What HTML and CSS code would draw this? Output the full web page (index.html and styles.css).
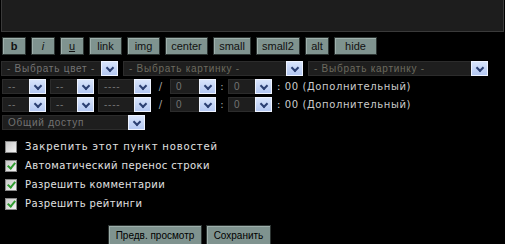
FILE: index.html
```html
<!DOCTYPE html>
<html lang="ru">
<head>
    <meta charset="UTF-8">
    <title>Добавить новость</title>
    <link rel="stylesheet" href="styles.css">
</head>
<body>

<div class="text"></div>

<div class="tags">
    <span class="btn w24"><b>b</b></span>
    <span class="btn w24"><i>i</i></span>
    <span class="btn w24"><u>u</u></span>
    <span class="btn w33">link</span>
    <span class="btn w33">img</span>
    <span class="btn w43">center</span>
    <span class="btn w38">small</span>
    <span class="btn w44">small2</span>
    <span class="btn w24">alt</span>
    <span class="btn w43">hide</span>
</div>

<div class="row r1">
    <span class="sel s117">- Выбрать цвет -<i class="arr"></i></span>
    <span class="sel s180 dim">- Выбрать картинку -<i class="arr"></i></span>
    <span class="sel s180 dim">- Выбрать картинку -<i class="arr"></i></span>
</div>

<div class="row">
    <span class="sel s44">--<i class="arr"></i></span>
    <span class="sel s44">--<i class="arr"></i></span>
    <span class="sel s53">----<i class="arr"></i></span>
    <span class="sep slash">/</span>
    <span class="sel s46">0<i class="arr"></i></span>
    <span class="sep colon">:</span>
    <span class="sel s44">0<i class="arr"></i></span>
    <span class="note">: 00 (Дополнительный)</span>
</div>

<div class="row">
    <span class="sel s44">--<i class="arr"></i></span>
    <span class="sel s44">--<i class="arr"></i></span>
    <span class="sel s53">----<i class="arr"></i></span>
    <span class="sep slash">/</span>
    <span class="sel s46">0<i class="arr"></i></span>
    <span class="sep colon">:</span>
    <span class="sel s44">0<i class="arr"></i></span>
    <span class="note">: 00 (Дополнительный)</span>
</div>

<div class="row">
    <span class="sel s143">Общий доступ<i class="arr"></i></span>
</div>

<div class="checks">
    <label class="chk wide"><i class="box"></i>Закрепить этот пункт новостей</label>
    <label class="chk"><i class="box on"></i>Автоматический перенос строки</label>
    <label class="chk"><i class="box on"></i>Разрешить комментарии</label>
    <label class="chk"><i class="box on"></i>Разрешить рейтинги</label>
</div>

<div class="actions">
    <span class="btn big w94">Предв. просмотр</span>
    <span class="btn big w65">Сохранить</span>
</div>

</body>
</html>
```

FILE: styles.css
```css
*{
    margin: 0;
    padding: 0;
    box-sizing: border-box;
}
html, body{
    height: 100%;
    overflow: hidden;
}
body{
    background: #000;
    font-family: "DejaVu Sans", Verdana, sans-serif;
    font-size: 10px;
    color: #ddd;
}

.text{
    margin-left: 1px;
    width: 503px;
    height: 32px;
    background: #1d1d1d;
    border: 1px solid #3a3a3a;
    border-top: none;
}

.tags{
    display: flex;
    gap: 5px;
    margin: 5px 0 0 2px;
}
.btn{
    display: flex;
    align-items: center;
    justify-content: center;
    height: 18px;
    background: #7f938f;
    border: 1px solid #2d3533;
    box-shadow: inset 1px 1px 0 #9fb0ac;
    color: #111;
    font-family: Tahoma, "Liberation Sans", sans-serif;
    font-size: 11px;
}
.btn i{ font-style: italic; }
.btn b{ font-weight: bold; }
.w24{ width: 24px; }
.w33{ width: 33px; }
.w38{ width: 38px; }
.w43{ width: 43px; }
.w44{ width: 44px; }
.w65{ width: 65px; }
.w94{ width: 94px; }

.row{
    display: flex;
    align-items: center;
    gap: 4px;
    margin: 3px 0 0 2px;
    height: 15px;
}
.r1{
    margin: 6px 0 0 1px;
    gap: 5px;
}
.sel{
    display: flex;
    align-items: center;
    justify-content: space-between;
    height: 15px;
    padding-left: 5px;
    background: #1e1e1e;
    border: 1px solid #2c2c2c;
    color: #737373;
    font-family: "Liberation Sans", Arial, sans-serif;
    font-size: 10px;
    letter-spacing: 0.75px;
}
.sel.dim{ color: #6c6a5e; }
.s44{ width: 44px; }
.s46{ width: 46px; }
.s53{ width: 53px; }
.s117{ width: 117px; }
.s143{ width: 143px; }
.s180{ width: 180px; }

.arr{
    position: relative;
    width: 17px;
    height: 15px;
    margin-right: -1px;
    background: linear-gradient(#d8e4fb, #b4c8f2);
    border: 1px solid #eef3ff;
}
.arr::after{
    content: "";
    position: absolute;
    left: 5px;
    top: 3px;
    width: 4px;
    height: 4px;
    border-right: 2px solid #2b3f72;
    border-bottom: 2px solid #2b3f72;
    transform: rotate(45deg);
}

.sep{
    text-align: center;
    color: #aaa;
}
.slash{ width: 11px; }
.colon{ width: 4px; }
.note{
    margin-left: 1px;
    color: #ccc;
    letter-spacing: 0.6px;
}

.checks{
    margin: 10px 0 0 5px;
    display: flex;
    flex-direction: column;
    gap: 6px;
}
.chk{
    display: flex;
    align-items: center;
    gap: 8px;
    height: 13px;
    letter-spacing: 0.4px;
    color: #e2e2e2;
}
.chk.wide{ letter-spacing: 0.85px; }
.box{
    position: relative;
    width: 12px;
    height: 12px;
    background: linear-gradient(135deg, #c9c9c9, #f4f4f4);
    border: 1px solid #888;
}
.box.on::after{
    content: "";
    position: absolute;
    left: 3px;
    top: 0;
    width: 3px;
    height: 6px;
    border-right: 2px solid #2f9a2f;
    border-bottom: 2px solid #2f9a2f;
    transform: rotate(40deg);
}

.actions{
    display: flex;
    gap: 4px;
    margin: 15px 0 0 108px;
}
.btn.big{
    height: 20px;
    font-size: 10px;
    color: #000;
}
```
